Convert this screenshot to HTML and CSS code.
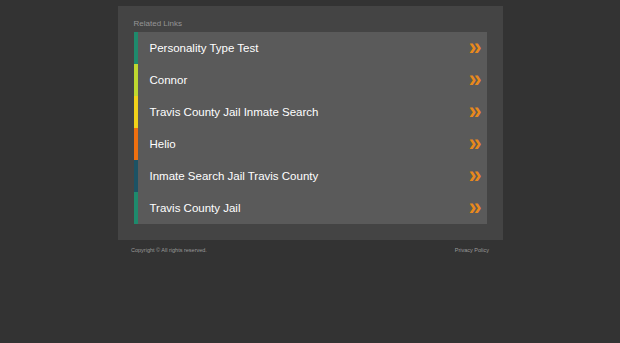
FILE: index.html
```html
<!DOCTYPE html>
<html lang="en">
<head>
  <meta charset="UTF-8" />
  <title>Related Links</title>
  <meta name="viewport" content="width=device-width, initial-scale=1.0" />
  <link rel="stylesheet" href="styles.css">
</head>
<body>

  <!-- Links box -->
  <div class="wrapper">
    <div class="title">Related Links</div>
    <ul class="links">
      <li class="c1"><a href="#">Personality Type Test</a><span class="arrow">&raquo;</span></li>
      <li class="c2"><a href="#">Connor</a><span class="arrow">&raquo;</span></li>
      <li class="c3"><a href="#">Travis County Jail Inmate Search</a><span class="arrow">&raquo;</span></li>
      <li class="c4"><a href="#">Helio</a><span class="arrow">&raquo;</span></li>
      <li class="c5"><a href="#">Inmate Search Jail Travis County</a><span class="arrow">&raquo;</span></li>
      <li class="c1"><a href="#">Travis County Jail</a><span class="arrow">&raquo;</span></li>
    </ul>
  </div>

  <footer>
    <span>Copyright &copy; All rights reserved.</span>
    <a href="#">Privacy Policy</a>
  </footer>

</body>
</html>
```

FILE: styles.css
```css
body {
  font-family: "Liberation Sans", Arial, sans-serif;
  margin: 0;
  background: #333333;
}

.wrapper {
  width: 353px;
  margin: 6px auto 0;
  padding: 12px 16px 16px;
  background: #444444;
}

.title {
  font-size: 8px;
  color: #959595;
  height: 14px;
  line-height: 12px;
}

.links {
  list-style: none;
  margin: 0;
  padding: 0;
  background: #5a5a5a;
}

.links li {
  display: flex;
  justify-content: space-between;
  align-items: center;
  height: 32px;
  padding: 0 5px 0 12px;
  border-left: 4px solid #1e8a6c;
}

.links a {
  color: #ffffff;
  font-size: 11.5px;
  text-decoration: none;
}

.arrow {
  color: #e8891c;
  font-size: 23px;
  font-weight: bold;
  line-height: 1;
  margin-top: -1px;
}

.c1 { border-left-color: #1e8a6c !important; }
.c2 { border-left-color: #bfd830 !important; }
.c3 { border-left-color: #f2d21a !important; }
.c4 { border-left-color: #f07010 !important; }
.c5 { border-left-color: #1c5264 !important; }

footer {
  width: 358px;
  margin: 0 auto;
  padding: 7px 0;
  display: flex;
  justify-content: space-between;
  font-size: 5.5px;
  color: #9a9a9a;
}

footer a {
  color: #9a9a9a;
  text-decoration: none;
}
```
